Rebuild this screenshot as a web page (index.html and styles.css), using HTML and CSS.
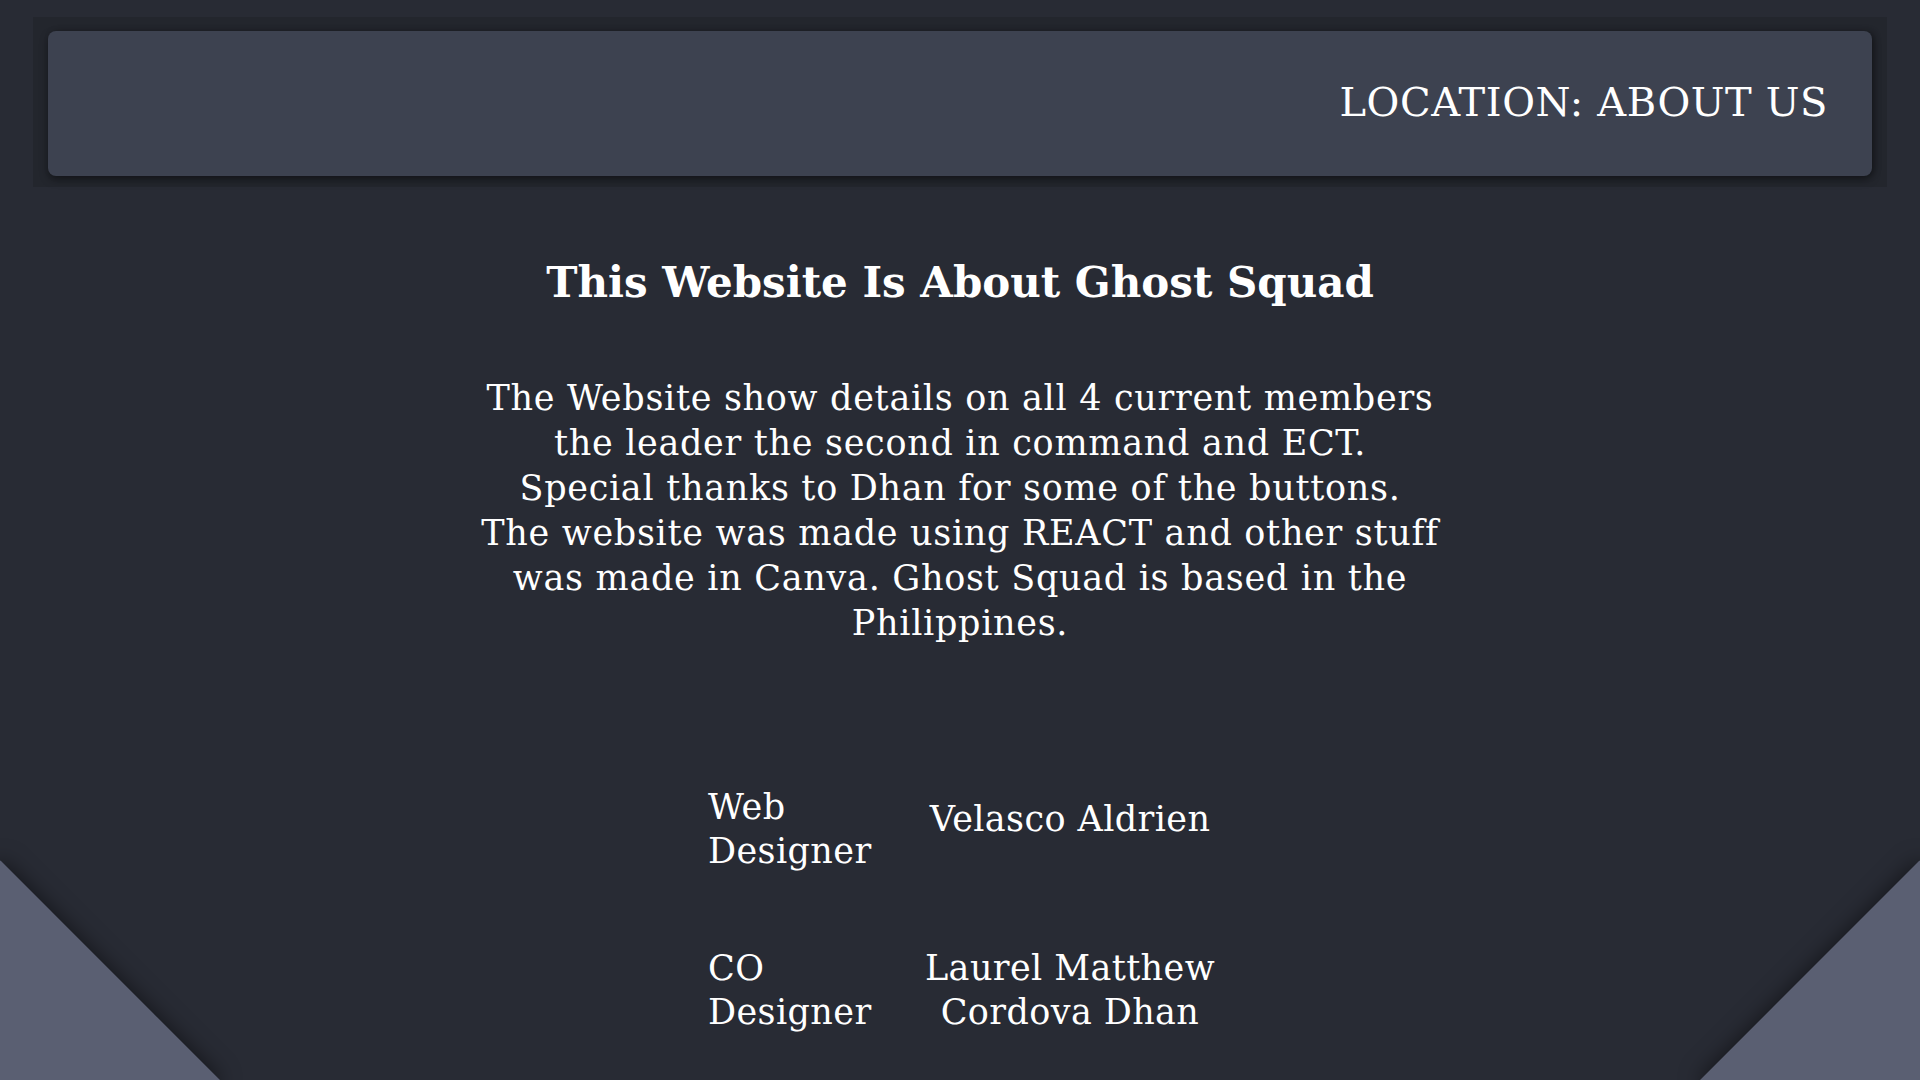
FILE: index.html
```html
<!DOCTYPE html>
<html lang="en">
<head>
<meta charset="utf-8">
<title>About Us - Ghost Squad</title>
<link rel="stylesheet" href="styles.css">
</head>
<body>
<div class="page">
  <header class="nav-wrap">
    <div class="nav-card">
      <span class="location">LOCATION: ABOUT US</span>
    </div>
  </header>
  <main class="about">
    <h1 class="about-title">This Website Is About Ghost Squad</h1>
    <p class="about-text">The Website show details on all 4 current members<br>
    the leader the second in command and ECT.<br>
    Special thanks to Dhan for some of the buttons.<br>
    The website was made using REACT and other stuff<br>
    was made in Canva. Ghost Squad is based in the<br>
    Philippines.</p>
    <div class="credits">
      <div class="role">Web Designer</div>
      <div class="name name-single">Velasco Aldrien</div>
      <div class="role">CO Designer</div>
      <div class="name">Laurel Matthew Cordova Dhan</div>
    </div>
  </main>
  <div class="corner corner-left"></div>
  <div class="corner corner-right"></div>
</div>
</body>
</html>
```
FILE: styles.css
```css
html, body {
  margin: 0;
  padding: 0;
}
* {
  box-sizing: border-box;
}
body {
  background: #282b34;
  color: #ffffff;
  font-family: "DejaVu Serif", "Liberation Serif", serif;
  overflow: hidden;
}
.page {
  position: relative;
  height: 1080px;
  overflow: hidden;
}
.nav-wrap {
  margin: 17px 33px 0 33px;
  padding: 14px 15px 11px 15px;
  background: #23262d;
}
.nav-card {
  height: 145px;
  background: #3d4250;
  border-radius: 8px;
  box-shadow: 0 4px 8px rgba(0, 0, 0, 0.35), 3px 0 6px rgba(0, 0, 0, 0.25);
  display: flex;
  align-items: center;
  justify-content: flex-end;
  padding: 0 44px 4px 44px;
}
.location {
  font-size: 40px;
  letter-spacing: 0.6px;
}
.about {
  position: relative;
  z-index: 1;
  display: flex;
  flex-direction: column;
  align-items: center;
  text-align: center;
}
.about-title {
  margin: 71px 0 0 0;
  font-size: 42px;
  font-weight: bold;
  line-height: 1.2;
}
.about-text {
  margin: 68px 0 0 0;
  width: 1000px;
  font-size: 35px;
  letter-spacing: 0.7px;
  line-height: 45px;
}
.credits {
  margin-top: 139px;
  display: grid;
  grid-template-columns: 180px 364px;
  row-gap: 73px;
  padding-left: 40px;
  font-size: 35px;
  letter-spacing: 0.4px;
  line-height: 44px;
  align-items: start;
}
.role {
  text-align: left;
}
.name {
  text-align: center;
}
.name-single {
  padding-top: 12px;
}
.corner {
  position: absolute;
  top: 925px;
  width: 311px;
  height: 311px;
  background: #5a5f72;
  transform: rotate(45deg);
  box-shadow: 0 0 22px rgba(0, 0, 0, 0.55);
  z-index: 0;
}
.corner-left {
  left: -155px;
}
.corner-right {
  right: -155px;
}
```
